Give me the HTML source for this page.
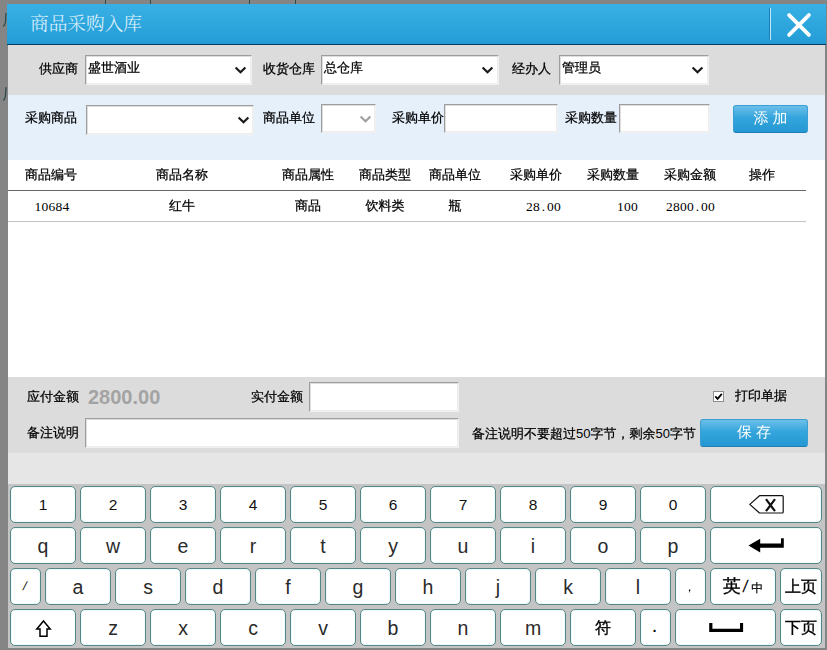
<!DOCTYPE html>
<html lang="zh-CN">
<head>
<meta charset="utf-8">
<title>商品采购入库</title>
<style>
html,body{margin:0;padding:0;}
body{width:827px;height:650px;overflow:hidden;background:#858585;position:relative;
  font-family:"Liberation Sans","WenQuanYi Zen Hei","Noto Sans CJK SC",sans-serif;font-size:13px;color:#000;}
*{box-sizing:border-box;}
.abs{position:absolute;}
/* background remnants behind the modal */
.bgl{position:absolute;top:0;width:1px;height:4px;background:#2f4a4a;}
/* title bar */
#title{position:absolute;left:7px;top:4px;width:819px;height:41px;
  background:linear-gradient(#39b1e5,#239cd6);border-bottom:1px solid #06395b;}
#title .t{position:absolute;left:23px;top:0;height:40px;line-height:40px;font-size:18.67px;color:#e2f3fc;
  font-family:"Liberation Serif","Noto Serif CJK SC",serif;font-weight:300;white-space:nowrap;-webkit-text-stroke:0;}
#title .sep{position:absolute;left:762px;top:4px;width:2px;height:32px;border-left:1px solid #1c7fb3;border-right:1px solid #bfe9fb;}
#title svg{position:absolute;left:778px;top:7px;}
/* body */
#dlg{position:absolute;left:8px;top:45px;width:817px;height:603px;background:#fff;overflow:hidden;}
.r1{position:absolute;left:0;top:0;width:817px;height:50px;background:#dcdcdc;}
.r2{position:absolute;left:0;top:50px;width:817px;height:65px;background:#e6f0fb;}
.r4{position:absolute;left:0;top:332px;width:817px;height:76px;background:#dcdcdc;}
.r5{position:absolute;left:0;top:408px;width:817px;height:31px;background:#e6e6e6;}
.kb{position:absolute;left:0;top:439px;width:817px;height:164px;background:#c4c4c4;}
.lb{position:absolute;white-space:nowrap;height:16px;line-height:16px;}
.box{position:absolute;background:#fff;border:1px solid;border-color:#9d9d9d #f1f1f1 #f1f1f1 #9d9d9d;box-shadow:inset 1px 1px 0 #dedede,inset -1px -1px 0 #ededed;height:30px;line-height:24px;padding-left:2px;white-space:nowrap;}
.box svg{position:absolute;top:10px;}
.btn{position:absolute;height:28px;border-radius:3px;color:#fff;font-size:15px;text-align:center;line-height:24px;-webkit-text-stroke:0;
  background:linear-gradient(#6cbfe9,#34a5dc 45%,#2498d3);border:1px solid #3a9fd3;border-bottom-color:#1d7fb5;white-space:pre;}
.th{position:absolute;top:122px;height:16px;line-height:16px;white-space:nowrap;text-align:center;}
.td{position:absolute;top:153px;height:16px;line-height:16px;white-space:nowrap;text-align:center;}
.lb,.box,.th,.td{-webkit-text-stroke:0.25px #000;}
.num{font-family:"Liberation Serif",serif;font-size:13.5px;letter-spacing:0.25px;-webkit-text-stroke:0;margin-top:1px;}
.n0{-webkit-text-stroke:0;}
.num i{display:inline-block;width:7px;text-align:center;font-style:normal;}
.key{position:absolute;height:37px;background:#fff;border:1px solid #558585;border-radius:5px;text-align:center;
  box-shadow:inset 0 0 1px 0.5px #dff8f8;
  font-family:"Liberation Sans","WenQuanYi Zen Hei",sans-serif;color:#2a2a2a;font-size:19.5px;line-height:37px;white-space:nowrap;}
.key.d{font-size:15.5px;line-height:35px;color:#111;}
.key.c{font-size:16px;line-height:35px;color:#000;-webkit-text-stroke:0.35px #000;}
.key.e{font-size:18px;line-height:35px;}
.key.e .sl{font-size:17px;margin:0 4px 0 2px;-webkit-text-stroke:0;display:inline-block;transform:skewX(-8deg);}
.key.e .sm{font-size:12px;-webkit-text-stroke:0.2px #000;}
.key.s{font-size:12px;line-height:35px;color:#000;}
.key.s .sl0{display:inline-block;transform:skewX(-14deg);position:relative;left:-1px;}
.key.cm{font-size:12px;line-height:37px;text-indent:-2px;}
.key.dot{font-size:20px;line-height:30px;text-indent:-2px;}
.key svg{position:absolute;}
</style>
</head>
<body>
<div class="bgl" style="left:105px"></div><div class="bgl" style="left:150px"></div>
<div class="bgl" style="left:249px"></div><div class="bgl" style="left:295px"></div>
<svg class="abs" style="left:0;top:0" width="8" height="110" viewBox="0 0 8 110"><path d="M6.7 13.6 H5.9 L5.5 22 Q5 25 3.3 26.6 M6.7 87.8 H5.9 L5.5 96 Q5 99 3.3 100.6" stroke="#2f4c4c" stroke-width="1.3" fill="none"/></svg>

<div id="title">
  <div class="t">商品采购入库</div>
  <div class="sep"></div>
  <svg width="28" height="28" viewBox="0 0 28 28"><path d="M4.1 4.1 L23.9 23.9 M23.9 4.1 L4.1 23.9" stroke="#fff" stroke-width="3.8" stroke-linecap="round" fill="none"/></svg>
</div>

<div id="dlg">
  <div class="r1"></div><div class="r2"></div><div class="r4"></div><div class="r5"></div><div class="kb"></div>

  <!-- row 1 -->
  <div class="lb" style="left:31px;top:16px">供应商</div>
  <div class="box" style="left:77px;top:10px;width:167px">盛世酒业<svg style="left:148px" width="13" height="9" viewBox="0 0 13 9"><path d="M1.6 1.5 L6.5 6.3 L11.4 1.5" stroke="#1a1a1a" stroke-width="2.2" fill="none"/></svg></div>
  <div class="lb" style="left:255px;top:16px">收货仓库</div>
  <div class="box" style="left:313px;top:10px;width:178px">总仓库<svg style="left:159px" width="13" height="9" viewBox="0 0 13 9"><path d="M1.6 1.5 L6.5 6.3 L11.4 1.5" stroke="#1a1a1a" stroke-width="2.2" fill="none"/></svg></div>
  <div class="lb" style="left:504px;top:16px">经办人</div>
  <div class="box" style="left:551px;top:10px;width:150px">管理员<svg style="left:131px" width="13" height="9" viewBox="0 0 13 9"><path d="M1.6 1.5 L6.5 6.3 L11.4 1.5" stroke="#1a1a1a" stroke-width="2.2" fill="none"/></svg></div>

  <!-- row 2 -->
  <div class="lb" style="left:17px;top:65px">采购商品</div>
  <div class="box" style="left:78px;top:60px;width:168px;height:30px"><svg style="left:150px" width="13" height="9" viewBox="0 0 13 9"><path d="M1.6 1.5 L6.5 6.3 L11.4 1.5" stroke="#1a1a1a" stroke-width="2.2" fill="none"/></svg></div>
  <div class="lb" style="left:255px;top:65px">商品单位</div>
  <div class="box" style="left:313px;top:59px;width:55px;height:29px"><svg style="left:37px" width="13" height="9" viewBox="0 0 13 9"><path d="M1.6 1.5 L6.5 6.3 L11.4 1.5" stroke="#a0a0a0" stroke-width="2.2" fill="none"/></svg></div>
  <div class="lb" style="left:384px;top:65px">采购单价</div>
  <div class="box" style="left:436px;top:59px;width:114px;height:29px"></div>
  <div class="lb" style="left:557px;top:65px">采购数量</div>
  <div class="box" style="left:611px;top:59px;width:91px;height:29px"></div>
  <div class="btn" style="left:725px;top:60px;width:75px">添 加</div>

  <!-- table -->
  <div class="th" style="left:13px;width:60px">商品编号</div>
  <div class="th" style="left:144px;width:60px">商品名称</div>
  <div class="th" style="left:270px;width:60px">商品属性</div>
  <div class="th" style="left:347px;width:60px">商品类型</div>
  <div class="th" style="left:417px;width:60px">商品单位</div>
  <div class="th" style="left:498px;width:60px">采购单价</div>
  <div class="th" style="left:575px;width:60px">采购数量</div>
  <div class="th" style="left:652px;width:60px">采购金额</div>
  <div class="th" style="left:724px;width:60px">操作</div>
  <div class="abs" style="left:0;top:145px;width:798px;height:1px;background:#666"></div>
  <div class="td num" style="left:13px;width:62px">10684</div>
  <div class="td" style="left:144px;width:60px">红牛</div>
  <div class="td" style="left:270px;width:60px">商品</div>
  <div class="td" style="left:347px;width:60px">饮料类</div>
  <div class="td" style="left:417px;width:60px">瓶</div>
  <div class="td num" style="left:493px;width:60px;text-align:right">28<i>.</i>00</div>
  <div class="td num" style="left:570px;width:60px;text-align:right">100</div>
  <div class="td num" style="left:647px;width:60px;text-align:right">2800<i>.</i>00</div>
  <div class="abs" style="left:0;top:176px;width:798px;height:1px;background:#c4c4c4"></div>

  <!-- totals -->
  <div class="lb" style="left:19px;top:344px">应付金额</div>
  <div class="abs" style="left:80px;top:338.5px;height:26px;line-height:26px;font-family:'Liberation Sans',sans-serif;font-weight:bold;font-size:20px;color:#a3a3a3">2800.00</div>
  <div class="lb" style="left:243px;top:344px">实付金额</div>
  <div class="box" style="left:301px;top:337px;width:150px"></div>
  <div class="abs" style="left:705px;top:346px;width:11px;height:11px;background:#fff;border:1px solid #8e8e8e;"><svg class="abs" style="left:0;top:0" width="9" height="9" viewBox="0 0 9 9"><path d="M1.3 4.4 L3.6 6.8 L7.8 1.8" stroke="#000" stroke-width="1.8" fill="none"/></svg></div>
  <div class="lb" style="left:727px;top:343px">打印单据</div>
  <div class="lb" style="left:19px;top:380px">备注说明</div>
  <div class="box" style="left:77px;top:373px;width:374px"></div>
  <div class="lb" style="left:464px;top:381px">备注说明不要超过<span class="n0">50</span>字节，剩余<span class="n0">50</span>字节</div>
  <div class="btn" style="left:692px;top:374px;width:108px">保 存</div>

  <!-- keyboard -->
  <div id="kbd">
  <div class="key d" style="left:2px;top:441px;width:66px">1</div>
  <div class="key d" style="left:72px;top:441px;width:66px">2</div>
  <div class="key d" style="left:142px;top:441px;width:66px">3</div>
  <div class="key d" style="left:212px;top:441px;width:66px">4</div>
  <div class="key d" style="left:282px;top:441px;width:66px">5</div>
  <div class="key d" style="left:352px;top:441px;width:66px">6</div>
  <div class="key d" style="left:422px;top:441px;width:66px">7</div>
  <div class="key d" style="left:492px;top:441px;width:66px">8</div>
  <div class="key d" style="left:562px;top:441px;width:66px">9</div>
  <div class="key d" style="left:632px;top:441px;width:66px">0</div>
  <div class="key" style="left:702px;top:441px;width:112px"><svg style="left:37px;top:7px" width="38" height="22" viewBox="0 0 38 22"><path d="M1.8 10.4 L11.5 1.7 H34.2 Q35.2 1.7 35.2 2.7 V18 Q35.2 19 34.2 19 H11.5 Z" stroke="#111" stroke-width="1.2" fill="none" stroke-linejoin="round"/><path d="M18 5.2 L27 17.2 M27 5.2 L18 17.2" stroke="#111" stroke-width="2.2" fill="none"/></svg></div>
  <div class="key" style="left:2px;top:482px;width:66px">q</div>
  <div class="key" style="left:72px;top:482px;width:66px">w</div>
  <div class="key" style="left:142px;top:482px;width:66px">e</div>
  <div class="key" style="left:212px;top:482px;width:66px">r</div>
  <div class="key" style="left:282px;top:482px;width:66px">t</div>
  <div class="key" style="left:352px;top:482px;width:66px">y</div>
  <div class="key" style="left:422px;top:482px;width:66px">u</div>
  <div class="key" style="left:492px;top:482px;width:66px">i</div>
  <div class="key" style="left:562px;top:482px;width:66px">o</div>
  <div class="key" style="left:632px;top:482px;width:66px">p</div>
  <div class="key" style="left:702px;top:482px;width:112px"><svg style="left:37px;top:9px" width="38" height="18" viewBox="0 0 38 18"><path d="M0.5 8.6 L12.2 1.8 V15.4 Z" fill="#000"/><path d="M11 6.6 H33 V1.2 H35.8 V10.8 H11 Z" fill="#000"/></svg></div>
  <div class="key s" style="left:2px;top:523px;width:31px"><span class="sl0">/</span></div>
  <div class="key" style="left:37px;top:523px;width:66px">a</div>
  <div class="key" style="left:107px;top:523px;width:66px">s</div>
  <div class="key" style="left:177px;top:523px;width:66px">d</div>
  <div class="key" style="left:247px;top:523px;width:66px">f</div>
  <div class="key" style="left:317px;top:523px;width:66px">g</div>
  <div class="key" style="left:387px;top:523px;width:66px">h</div>
  <div class="key" style="left:457px;top:523px;width:66px">j</div>
  <div class="key" style="left:527px;top:523px;width:66px">k</div>
  <div class="key" style="left:597px;top:523px;width:66px">l</div>
  <div class="key s cm" style="left:667px;top:523px;width:31px">，</div>
  <div class="key c e" style="left:702px;top:523px;width:66px">英<span class="sl">/</span><span class="sm">中</span></div>
  <div class="key c" style="left:772px;top:523px;width:42px">上页</div>
  <div class="key" style="left:2px;top:564px;width:66px"><svg style="left:22.2px;top:8px" width="21" height="21" viewBox="0 0 21 21"><path d="M10.5 3 L17.2 11 H14 V18.25 H7 V11 H3.8 Z" stroke="#000" stroke-width="1.5" fill="#fff" stroke-linejoin="miter"/></svg></div>
  <div class="key" style="left:72px;top:564px;width:66px">z</div>
  <div class="key" style="left:142px;top:564px;width:66px">x</div>
  <div class="key" style="left:212px;top:564px;width:66px">c</div>
  <div class="key" style="left:282px;top:564px;width:66px">v</div>
  <div class="key" style="left:352px;top:564px;width:66px">b</div>
  <div class="key" style="left:422px;top:564px;width:66px">n</div>
  <div class="key" style="left:492px;top:564px;width:66px">m</div>
  <div class="key c" style="left:562px;top:564px;width:66px">符</div>
  <div class="key s dot" style="left:632px;top:564px;width:31px">.</div>
  <div class="key" style="left:667px;top:564px;width:101px"><svg style="left:32px;top:12px" width="38" height="12" viewBox="0 0 38 12"><path d="M1.2 0.9 H4.4 V6.8 H32 V0.9 H35.1 V10 H1.2 Z" fill="#000"/></svg></div>
  <div class="key c" style="left:772px;top:564px;width:42px">下页</div>
  </div>
</div>
</body>
</html>
